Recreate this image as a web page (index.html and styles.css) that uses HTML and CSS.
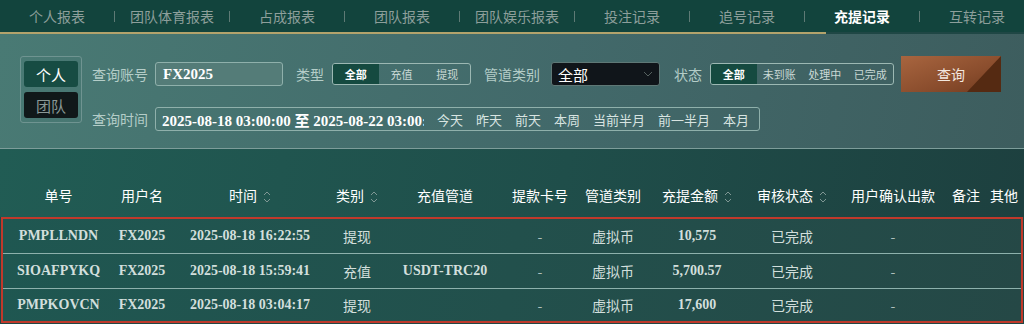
FILE: index.html
```html
<!DOCTYPE html>
<html lang="zh-CN">
  <head>
    <meta charset="UTF-8" />
    <meta name="viewport" content="width=device-width, initial-scale=1.0" />
    <title>充提记录</title>
    <link rel="stylesheet" href="styles.css">
  </head>

  <body>
    <nav class="tabs">
      <a class="tab">个人报表</a><i class="sep"></i>
      <a class="tab">团队体育报表</a><i class="sep"></i>
      <a class="tab">占成报表</a><i class="sep"></i>
      <a class="tab">团队报表</a><i class="sep"></i>
      <a class="tab">团队娱乐报表</a><i class="sep"></i>
      <a class="tab">投注记录</a><i class="sep"></i>
      <a class="tab">追号记录</a><i class="sep"></i>
      <a class="tab active">充提记录</a><i class="sep"></i>
      <a class="tab">互转记录</a>
    </nav>
    <div class="tab-line"></div>

    <section class="filter">
      <div class="who">
        <button type="button" class="who-btn on">个人</button>
        <button type="button" class="who-btn">团队</button>
      </div>

      <div class="fields">
        <div class="row">
          <span class="label">查询账号</span>
          <div class="input">FX2025</div>
          <span class="label gap">类型</span>
          <div class="seg seg-type">
            <span class="on">全部</span>
            <span>充值</span>
            <span>提现</span>
          </div>
          <span class="label gap">管道类别</span>
          <div class="select">
            全部
            <svg width="10" height="6" viewBox="0 0 10 6"><path d="M1 1l4 4 4-4" fill="none" stroke="#56615f" stroke-width="1"/></svg>
          </div>
          <span class="label gap2">状态</span>
          <div class="seg seg-state">
            <span class="on">全部</span>
            <span>未到账</span>
            <span>处理中</span>
            <span>已完成</span>
          </div>
          <button type="button" class="search">查询</button>
        </div>

        <div class="row row2">
          <span class="label">查询时间</span>
          <div class="date-box">
            <input class="date" type="text" value="2025-08-18 03:00:00 至 2025-08-22 03:00:00" readonly>
            <span class="quick">今天</span>
            <span class="quick">昨天</span>
            <span class="quick">前天</span>
            <span class="quick">本周</span>
            <span class="quick">当前半月</span>
            <span class="quick">前一半月</span>
            <span class="quick">本月</span>
          </div>
        </div>
      </div>
    </section>

    <div class="thead">
      <div class="grid">
        <span>单号</span>
        <span>用户名</span>
        <span>时间<svg class="sort" width="8" height="14" viewBox="0 0 8 14"><path d="M1 5l3-3 3 3M1 9l3 3 3-3" fill="none" stroke="#7f9794" stroke-width="1"/></svg></span>
        <span>类别<svg class="sort" width="8" height="14" viewBox="0 0 8 14"><path d="M1 5l3-3 3 3M1 9l3 3 3-3" fill="none" stroke="#7f9794" stroke-width="1"/></svg></span>
        <span>充值管道</span>
        <span>提款卡号</span>
        <span>管道类别</span>
        <span>充提金额<svg class="sort" width="8" height="14" viewBox="0 0 8 14"><path d="M1 5l3-3 3 3M1 9l3 3 3-3" fill="none" stroke="#7f9794" stroke-width="1"/></svg></span>
        <span>审核状态<svg class="sort" width="8" height="14" viewBox="0 0 8 14"><path d="M1 5l3-3 3 3M1 9l3 3 3-3" fill="none" stroke="#7f9794" stroke-width="1"/></svg></span>
        <span>用户确认出款</span>
        <span>备注</span>
        <span>其他</span>
      </div>
    </div>

    <div class="tbody">
      <div class="grid trow">
        <span class="num">PMPLLNDN</span>
        <span class="num">FX2025</span>
        <span class="num">2025-08-18 16:22:55</span>
        <span>提现</span>
        <span class="num"></span>
        <span class="dash">-</span>
        <span>虚拟币</span>
        <span class="num">10,575</span>
        <span>已完成</span>
        <span class="dash">-</span>
        <span></span>
        <span></span>
      </div>
      <div class="grid trow">
        <span class="num">SIOAFPYKQ</span>
        <span class="num">FX2025</span>
        <span class="num">2025-08-18 15:59:41</span>
        <span>充值</span>
        <span class="num">USDT-TRC20</span>
        <span class="dash">-</span>
        <span>虚拟币</span>
        <span class="num">5,700.57</span>
        <span>已完成</span>
        <span class="dash">-</span>
        <span></span>
        <span></span>
      </div>
      <div class="grid trow">
        <span class="num">PMPKOVCN</span>
        <span class="num">FX2025</span>
        <span class="num">2025-08-18 03:04:17</span>
        <span>提现</span>
        <span class="num"></span>
        <span class="dash">-</span>
        <span>虚拟币</span>
        <span class="num">17,600</span>
        <span>已完成</span>
        <span class="dash">-</span>
        <span></span>
        <span></span>
      </div>
    </div>
  </body>
</html>
```

FILE: styles.css
```css
body {
  margin: 0;
  background: #1f4745;
  font-family: "Noto Sans CJK SC", "Noto Sans", sans-serif;
  font-size: 14px;
  color: #fff;
  overflow: hidden;
}

/* tabs */
.tabs {
  display: flex;
  align-items: center;
  height: 32px;
  background: #12443d;
  white-space: nowrap;
  overflow: hidden;
}

.tab {
  flex: 0 0 114px;
  text-align: center;
  color: #8d9f9b;
  font-size: 14px;
  line-height: 32px;
}

.tab.active {
  color: #fff;
  font-weight: bold;
}

.sep {
  flex: 0 0 1px;
  height: 11px;
  background: #5e7a75;
}

.tab-line {
  width: 826px;
  height: 2px;
  background: #b3a36c;
}

/* filter panel */
.filter {
  display: flex;
  height: 115px;
  box-sizing: border-box;
  padding: 22px 20px 0 20px;
  background: linear-gradient(100deg, #497a74 0%, #42696a 55%, #3d5d5e 100%);
  border-bottom: 1px solid #7d9d9a;
}

.who {
  display: flex;
  flex-direction: column;
  gap: 5px;
  width: 62px;
  height: 67px;
  box-sizing: border-box;
  padding: 4px 3px;
  border: 1px solid #6f9491;
  border-radius: 3px;
}

.who-btn {
  height: 26px;
  border: 0;
  border-radius: 3px;
  background: #101819;
  color: #8a9896;
  font-family: inherit;
  font-size: 15px;
  padding: 0;
}

.who-btn.on {
  background: #174c43;
  color: #fff;
}

.fields {
  margin-left: 10px;
}

.row {
  display: flex;
  align-items: center;
  height: 36px;
}

.row2 {
  margin-top: 15px;
  height: 24px;
}

.label {
  color: #b4cdc8;
  font-size: 14px;
  margin-right: 7px;
  white-space: nowrap;
}

.label.gap {
  margin-left: 13px;
}

.label.gap2 {
  margin-left: 14px;
}

.input {
  width: 128px;
  height: 24px;
  box-sizing: border-box;
  padding-left: 7px;
  border: 1px solid #8fb0ab;
  border-radius: 3px;
  background: #547c78;
  font-family: "Liberation Serif", serif;
  font-weight: bold;
  font-size: 15px;
  line-height: 22px;
}

.seg {
  display: flex;
  height: 22px;
  box-sizing: border-box;
  border: 1px solid #9cb8b3;
  border-radius: 3px;
  overflow: hidden;
  margin-left: 1px;
}

.seg span {
  width: 46px;
  text-align: center;
  font-size: 11px;
  line-height: 20px;
  color: #c9d8d5;
}

.seg span.on {
  background: #154a40;
  color: #fff;
  font-weight: bold;
}

.seg-type {
  width: 139px;
}

.seg-state {
  width: 184px;
}

.select {
  display: flex;
  align-items: center;
  justify-content: space-between;
  width: 109px;
  height: 24px;
  box-sizing: border-box;
  padding: 0 6px 0 6px;
  margin-left: 4px;
  border: 1px solid #5f7876;
  border-radius: 3px;
  background: #10151a;
  font-size: 15px;
}

.search {
  position: relative;
  width: 100px;
  height: 36px;
  margin-left: 7px;
  border: 0;
  background: linear-gradient(160deg, #a8653f 0%, #8a4d2d 60%, #6f3a1e 100%);
  color: #f3e8e0;
  font-family: inherit;
  font-size: 14px;
  overflow: hidden;
}

.search::after {
  content: "";
  position: absolute;
  right: 0;
  top: 0;
  width: 34px;
  height: 36px;
  background: #552a12;
  clip-path: polygon(100% 0, 100% 100%, 0 100%);
}

.date-box {
  display: flex;
  align-items: center;
  gap: 13px;
  width: 605px;
  height: 24px;
  box-sizing: border-box;
  padding-left: 6px;
  border: 1px solid #8fb0ab;
  border-radius: 3px;
}

.date {
  flex: 0 0 262px;
  width: 262px;
  height: 20px;
  padding: 0;
  border: 0;
  outline: none;
  background: transparent;
  color: #fff;
  font-family: "Liberation Serif", "Noto Sans CJK SC", serif;
  font-weight: bold;
  font-size: 15px;
}

.quick {
  flex: 0 0 auto;
  white-space: nowrap;
  color: #d8e4e1;
  font-size: 13px;
}

/* table */
.grid {
  display: grid;
  grid-template-columns: 111px 56px 160px 54px 122px 68px 78px 90px 100px 102px 44px 32px;
  align-items: center;
  margin: 0 1px;
  border-left: 2px solid transparent;
}

.grid span {
  text-align: center;
  white-space: nowrap;
}

.thead {
  height: 68px;
  box-sizing: border-box;
  padding-top: 35px;
  background: linear-gradient(100deg, #215c54 0%, #1f4e4a 55%, #1d403f 100%);
  font-size: 14px;
  line-height: 22px;
}

.sort {
  margin-left: 6px;
  vertical-align: -3px;
}

.tbody {
  margin: 0 1px;
  border: 2px solid #c0392b;
  background: linear-gradient(100deg, #1f5751 0%, #22504c 50%, #254846 100%);
}

.tbody .grid {
  margin: 0;
  border-left: 0;
}

.trow {
  height: 34px;
  font-size: 14px;
  color: #d2dfdc;
  border-bottom: 1px solid #8db1ac;
}

.trow:last-child {
  height: 32px;
  border-bottom: 0;
}

.num {
  font-family: "Liberation Serif", serif;
  font-weight: bold;
}

.dash {
  color: #aebfbc;
}
```
